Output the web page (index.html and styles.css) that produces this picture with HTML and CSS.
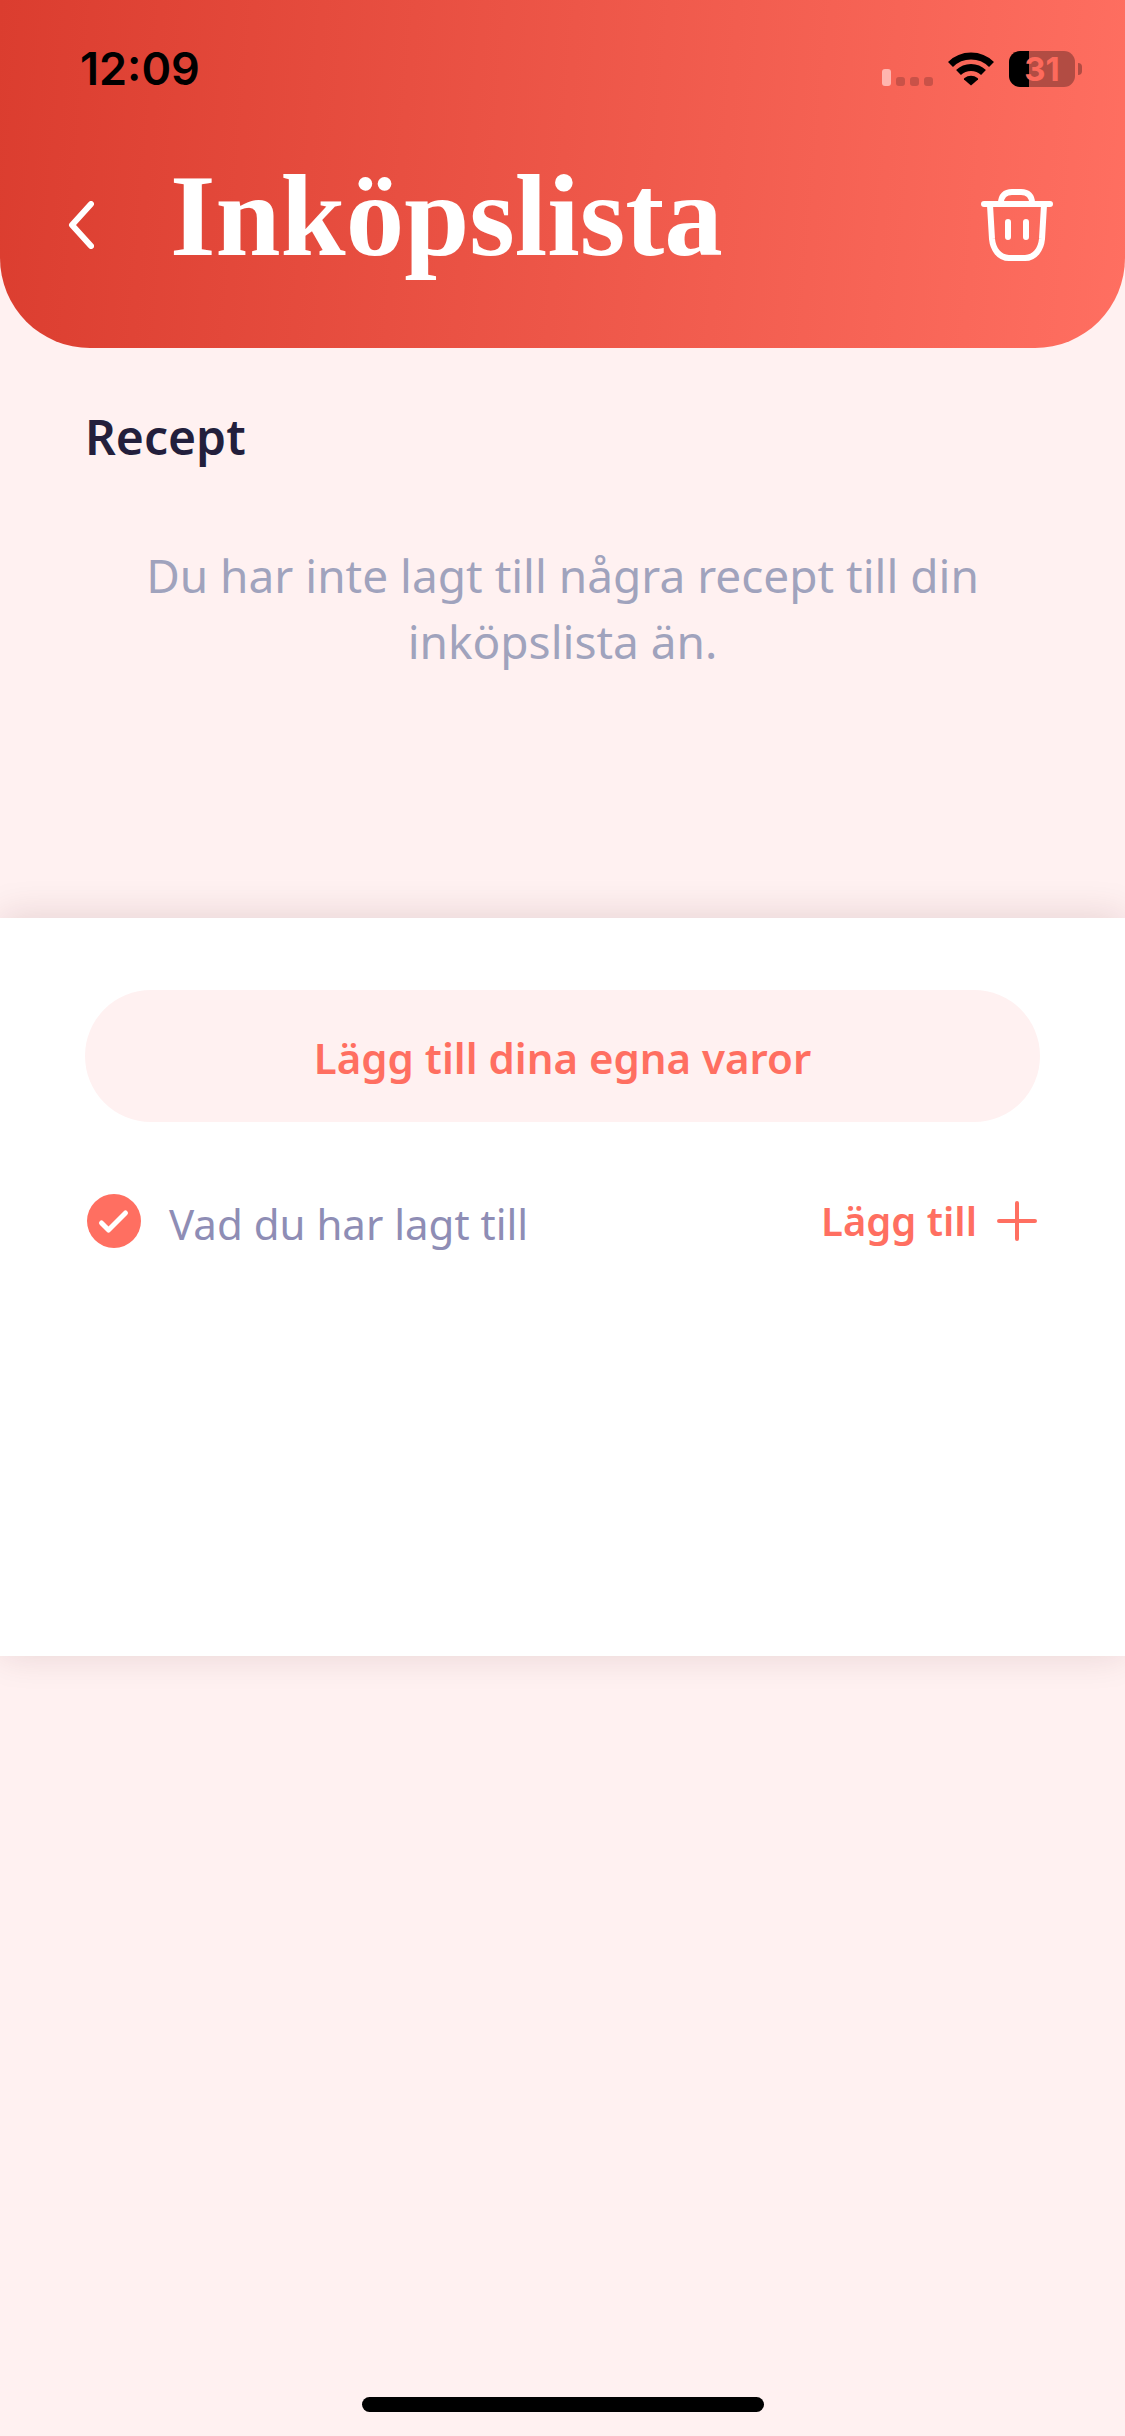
FILE: index.html
```html
<!DOCTYPE html>
<html lang="sv">
<head>
<meta charset="utf-8">
<meta name="viewport" content="width=device-width, initial-scale=1">
<title>Inköpslista</title>
<link rel="stylesheet" href="styles.css">
</head>
<body>
<div class="app">
  <header class="header">
    <div class="status">
      <time class="clock">12:09</time>
      <div class="indicators">
        <div class="signal"><i class="bar active"></i><i class="bar"></i><i class="bar"></i><i class="bar"></i></div>
        <svg class="wifi" width="46" height="34" viewBox="0 0 46 34" aria-hidden="true">
          <g fill="none" stroke="#000" stroke-width="7">
            <path d="M2.500 12.500A29 29 0 0 1 43.500 12.500"/>
            <path d="M10.500 20.500A18 18 0 0 1 35.500 20.500"/>
          </g>
          <path d="M23 33.500L16 27.500Q15.500 26.800 16.500 26A10.500 10.500 0 0 1 29.500 26Q30.500 26.800 30 27.500Z"/>
        </svg>
        <div class="battery"><span class="level">31</span><i class="nub"></i></div>
      </div>
    </div>
    <div class="titlebar">
      <button class="icon-button" type="button" aria-label="Tillbaka">
        <svg width="26" height="48" viewBox="0 0 26 48"><path d="M23 3L4 24L23 45" fill="none" stroke="#fff" stroke-width="6" stroke-linecap="round" stroke-linejoin="round"/></svg>
      </button>
      <h1 class="title">Inköpslista</h1>
      <button class="icon-button" type="button" aria-label="Töm listan">
        <svg width="72" height="72" viewBox="0 0 72 72" fill="none" stroke="#fff" stroke-width="6" stroke-linecap="round" stroke-linejoin="round">
          <path d="M3 15H69"/>
          <path d="M20 14C20 7 24 3 31 3H40C47 3 51 7 51 14" stroke-linecap="butt"/>
          <path d="M9 16L11 50C12 60 18 69 28 69H44C54 69 60 60 61 50L63 16"/>
          <path d="M27 33V48M45 33V48"/>
        </svg>
      </button>
    </div>
  </header>

  <main>
    <section class="recipes">
      <h2 class="heading">Recept</h2>
      <p class="empty">Du har inte lagt till några recept till din inköpslista än.</p>
    </section>

    <section class="own-items">
      <button class="add-own" type="button">Lägg till dina egna varor</button>
      <div class="row">
        <label class="added" for="added">
          <span class="check">
            <input id="added" type="checkbox" checked>
            <svg width="54" height="54" viewBox="0 0 54 54" aria-hidden="true"><path d="M14.500 29L21.500 36L38.500 19" fill="none" stroke="#fff" stroke-width="5" stroke-linecap="round" stroke-linejoin="round"/></svg>
          </span>
          <span class="added-text">Vad du har lagt till</span>
        </label>
        <button class="add" type="button">Lägg till
          <svg width="40" height="40" viewBox="0 0 40 40" aria-hidden="true"><path d="M20 2V38M2 20H38" stroke="currentColor" stroke-width="4" stroke-linecap="round"/></svg>
        </button>
      </div>
    </section>
  </main>

  <div class="home-indicator"></div>
</div>
</body>
</html>
```

FILE: styles.css
```css
* {
  box-sizing: border-box;
}

body {
  margin: 0;
  background: #fff1f1;
  font-family: "Noto Sans", sans-serif;
}

h1, h2, p {
  margin: 0;
}

button {
  border: 0;
  padding: 0;
  background: none;
  font: inherit;
  cursor: pointer;
}

svg {
  display: block;
}

.app {
  display: flex;
  flex-direction: column;
  min-height: 100vh;
}

.header {
  padding: 40px 43px 56px 68px;
  border-radius: 0 0 90px 90px;
  background: linear-gradient(95deg, #db3d2f, #ff6f61);
}

.status {
  display: flex;
  align-items: center;
  justify-content: space-between;
  padding-left: 12px;
}

.clock {
  font: 600 45px/58px Inter, sans-serif;
}

.indicators {
  display: flex;
  align-items: center;
  gap: 15px;
}

.signal {
  display: flex;
  align-items: flex-end;
  gap: 5px;
  height: 34px;
}

.bar {
  width: 9px;
  height: 9px;
  border-radius: 3px;
  background: #c95248;
}

.bar.active {
  height: 17px;
  background: #ffb5af;
}

.battery {
  display: flex;
  align-items: center;
  gap: 3px;
}

.level {
  width: 66px;
  border-radius: 11px;
  background: linear-gradient(90deg, #000 20px, #b24c43 20px);
  color: #fd6a5c;
  font: 700 33px/36px Inter, sans-serif;
  text-align: center;
}

.nub {
  width: 4px;
  height: 12px;
  border-radius: 0 6px 6px 0;
  background: #b24c43;
}

.titlebar {
  display: flex;
  align-items: center;
  margin-top: 60px;
  padding-right: 29px;
}

.title {
  flex: 1;
  margin-left: 76px;
  padding-bottom: 18px;
  color: #fff;
  font: 700 117px/116px "Liberation Serif", serif;
}

.recipes {
  min-height: 570px;
  padding: 56px 85px;
}

.heading {
  color: #231f3c;
  font-size: 48px;
  font-weight: 600;
  line-height: 66px;
}

.empty {
  margin-top: 72px;
  color: #a0a3bd;
  font-size: 46px;
  line-height: 66px;
  text-align: center;
}

.own-items {
  min-height: 738px;
  padding: 72px 85px;
  background: #fff;
  box-shadow: 0 -2px 36px rgba(80, 20, 30, 0.14);
  font-size: 42px;
  line-height: 54px;
}

.add-own {
  width: 100%;
  height: 132px;
  padding-top: 4px;
  border-radius: 66px;
  background: #fff1f1;
  color: #ff6f61;
  font-weight: 600;
}

.row {
  display: flex;
  align-items: center;
  justify-content: space-between;
  margin-top: 69px;
}

.added {
  display: flex;
  align-items: center;
  gap: 28px;
  padding-left: 2px;
  color: #8e8db5;
}

.added-text {
  padding-top: 6px;
}

.check {
  display: grid;
}

.check > * {
  grid-area: 1 / 1;
}

.check input {
  appearance: none;
  width: 54px;
  height: 54px;
  margin: 0;
  border-radius: 50%;
  background: #ff6f61;
}

.check svg {
  pointer-events: none;
}

.add {
  display: flex;
  align-items: center;
  gap: 20px;
  padding-right: 3px;
  color: #ff6f61;
  font-size: 40px;
  font-weight: 600;
}

.home-indicator {
  align-self: center;
  width: 402px;
  max-width: 60%;
  height: 15px;
  margin-top: auto;
  margin-bottom: 24px;
  border-radius: 8px;
  background: #000;
}
```
